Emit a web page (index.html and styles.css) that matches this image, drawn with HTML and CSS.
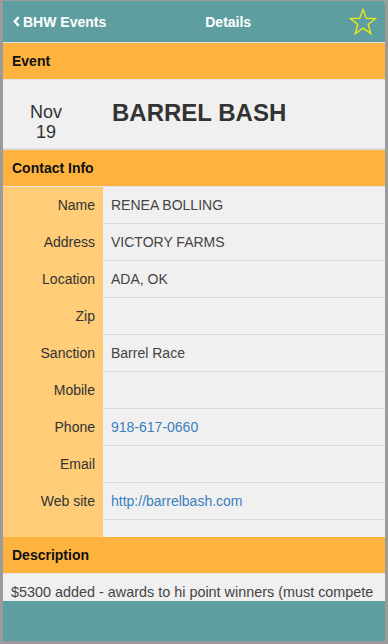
FILE: index.html
```html
<!DOCTYPE html>
<html lang="en">
<head>
    <meta charset="UTF-8">
    <meta name="viewport" content="width=device-width, initial-scale=1.0">
    <title>Details</title>
    <link rel="stylesheet" href="styles.css">
</head>
<body>
    <div class="screen">
        <header class="topbar">
            <a class="back" href="#">
                <svg class="chev" viewBox="0 0 8 12" width="7" height="11"><path d="M6.5 1 L2 6 L6.5 11" fill="none" stroke="#fff" stroke-width="2.6"/></svg>
                BHW Events
            </a>
            <h1 class="title">Details</h1>
            <svg class="star" viewBox="0 0 28 28" width="28" height="28">
                <polygon points="14,1.5 17.3,10.3 26.5,10.6 19.2,16.4 21.8,25.5 14,20.2 6.2,25.5 8.8,16.4 1.5,10.6 10.7,10.3" fill="none" stroke="#e8e817" stroke-width="1.4" stroke-linejoin="miter"/>
            </svg>
        </header>

        <main class="content">
            <div class="section-head">Event</div>
            <div class="event">
                <div class="date">Nov<br>19</div>
                <div class="event-name">BARREL BASH</div>
            </div>

            <div class="section-head">Contact Info</div>
            <div class="info">
                <div class="row"><div class="label">Name</div><div class="value">RENEA BOLLING</div></div>
                <div class="row"><div class="label">Address</div><div class="value">VICTORY FARMS</div></div>
                <div class="row"><div class="label">Location</div><div class="value">ADA, OK</div></div>
                <div class="row"><div class="label">Zip</div><div class="value"></div></div>
                <div class="row"><div class="label">Sanction</div><div class="value">Barrel Race</div></div>
                <div class="row"><div class="label">Mobile</div><div class="value"></div></div>
                <div class="row"><div class="label">Phone</div><div class="value"><a href="#">918-617-0660</a></div></div>
                <div class="row"><div class="label">Email</div><div class="value"></div></div>
                <div class="row"><div class="label">Web site</div><div class="value"><a href="#">http://barrelbash.com</a></div></div>
                <div class="row short"><div class="label"></div><div class="value"></div></div>
            </div>

            <div class="section-head">Description</div>
            <p class="desc">$5300 added - awards to hi point winners (must compete</p>
        </main>

        <footer class="bottombar"></footer>
    </div>
</body>
</html>
```

FILE: styles.css
```css
* {
    margin: 0;
    padding: 0;
    box-sizing: border-box;
}

body {
    background-color: #9b9b9b;
    font-family: "Liberation Sans", Arial, sans-serif;
    font-size: 14px;
    color: #444;
    width: 388px;
    height: 644px;
    overflow: hidden;
}

.screen {
    margin: 1px 3px 0 3px;
    height: 640px;
    background-color: #f0f0f0;
    display: flex;
    flex-direction: column;
    overflow: hidden;
    border-radius: 0 3px 0 0;
}

.topbar {
    height: 42px;
    background-color: #5f9ea0;
    display: flex;
    align-items: center;
    border-bottom: 1px solid #e0e0e0;
    flex-shrink: 0;
}

.back {
    display: flex;
    align-items: center;
    gap: 3px;
    margin-left: 10px;
    color: #fff;
    font-weight: bold;
    font-size: 14px;
    text-decoration: none;
}

.title {
    margin-left: 99px;
    color: #fff;
    font-size: 14px;
    font-weight: bold;
}

.star {
    margin-left: auto;
    margin-right: 8px;
    margin-top: 1px;
}

.content {
    flex: 1;
    overflow: hidden;
}

.section-head {
    height: 37px;
    background-color: #ffb33f;
    color: #111;
    font-weight: bold;
    font-size: 14px;
    line-height: 36px;
    padding-left: 9px;
    border-bottom: 1px solid #e4e4e4;
}

.event {
    height: 70px;
    display: flex;
    align-items: flex-start;
    border-bottom: 2px solid #dcdcdc;
}

.date {
    width: 86px;
    text-align: center;
    font-size: 18px;
    line-height: 20px;
    color: #333;
    padding-top: 22px;
}

.event-name {
    margin-left: 23px;
    padding-top: 19px;
    font-size: 24px;
    line-height: 28px;
    font-weight: bold;
    color: #333;
}

.row {
    display: flex;
    height: 37px;
    border-bottom: 1px solid #dadada;
}

.row.short {
    height: 17px;
    border-bottom: none;
}

.label {
    width: 100px;
    flex-shrink: 0;
    background-color: #ffcc77;
    text-align: right;
    padding-right: 8px;
    line-height: 36px;
    color: #333;
    border-bottom: 1px solid #ffcc77;
    margin-bottom: -1px;
}

.row.short .label {
    border-bottom: none;
    margin-bottom: 0;
}

.value {
    padding-left: 8px;
    line-height: 36px;
    color: #444;
}

.value a {
    color: #3a7fc0;
    text-decoration: none;
}

.desc {
    padding: 9px 8px 0 8px;
    font-size: 14.4px;
    line-height: 18px;
    white-space: nowrap;
    color: #444;
}

.bottombar {
    height: 40px;
    background-color: #5f9ea0;
    flex-shrink: 0;
}
```
